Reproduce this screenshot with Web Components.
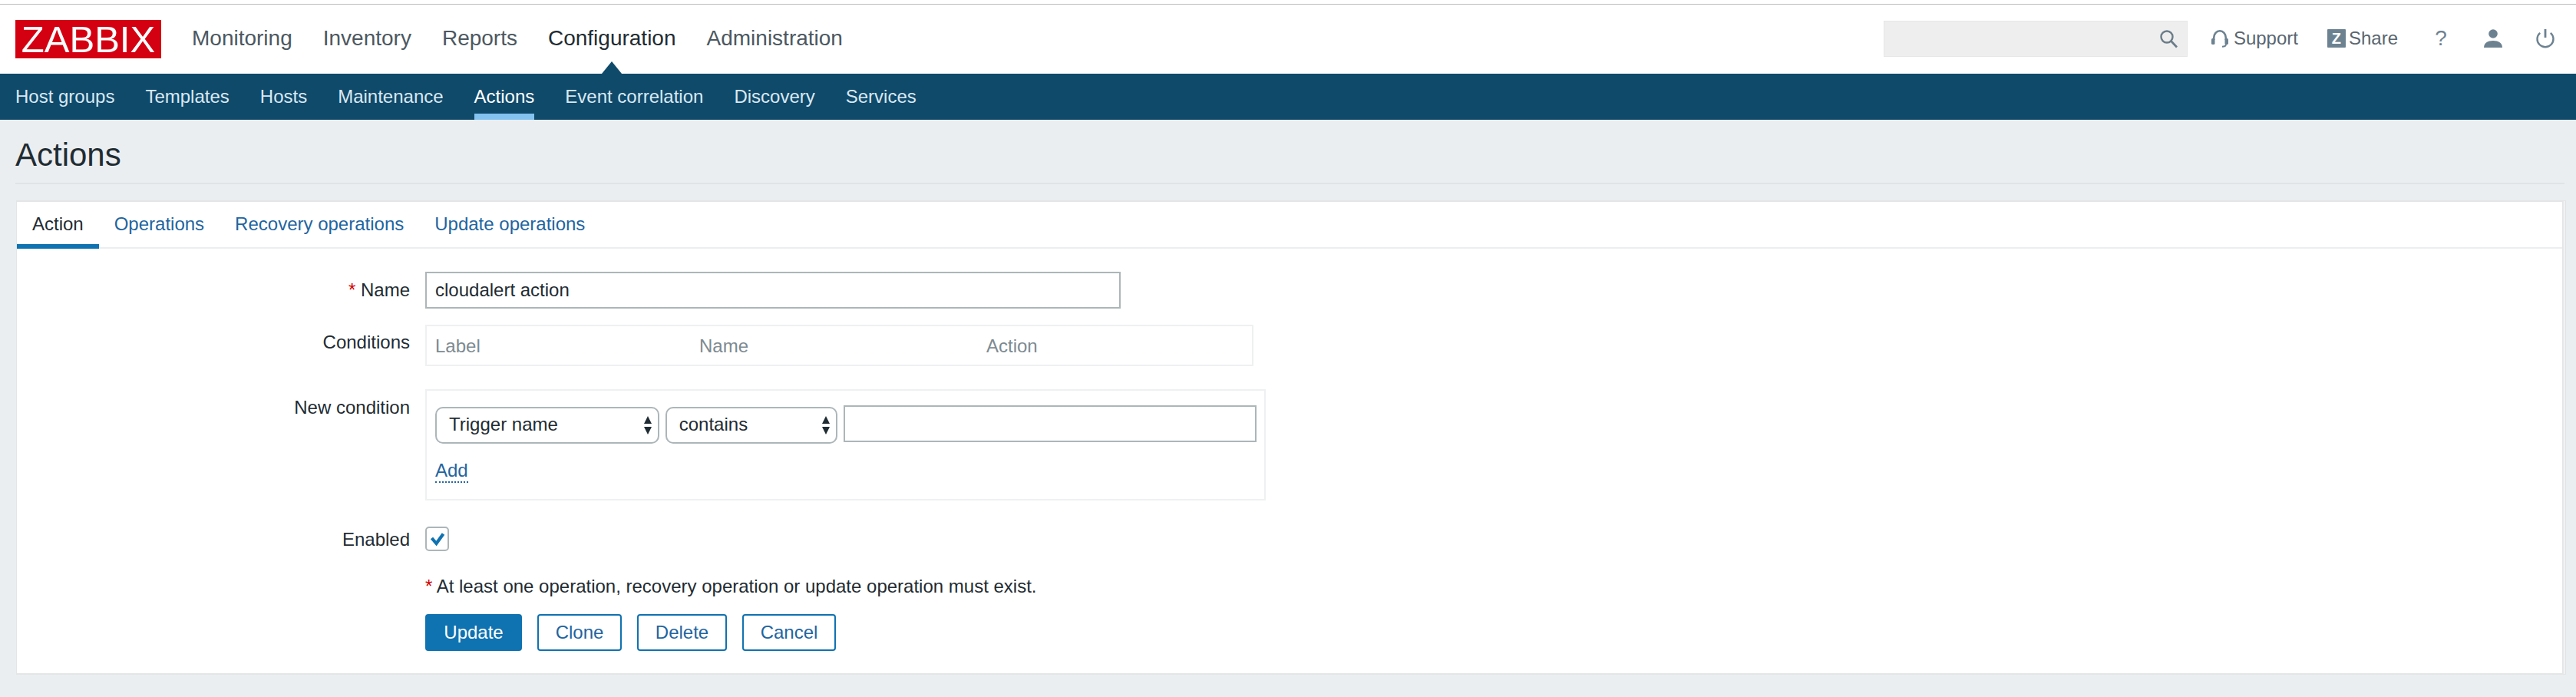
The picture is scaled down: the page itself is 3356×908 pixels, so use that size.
<!DOCTYPE html>
<html><head><meta charset="utf-8">
<style>
html,body{margin:0;padding:0;background:#ebeef0;font-family:"Liberation Sans",Arial,sans-serif;}
body{width:3356px;height:908px;overflow:hidden;}
</style></head><body>
<z-main-nav active="Configuration"></z-main-nav>
<z-sub-nav></z-sub-nav>
<z-page-title>Actions</z-page-title>
<z-card>
  <z-tabs slot="tabs"></z-tabs>
  <z-row top="30" label="Name" required><z-input w="906" value="cloudalert action"></z-input></z-row>
  <z-row top="21" label="Conditions" lh="46"><z-conditions></z-conditions></z-row>
  <z-row top="30" label="New condition"><z-new-condition></z-new-condition></z-row>
  <z-row top="34" label="Enabled" lh="34"><z-check></z-check></z-row>
  <z-row top="30" label=""><z-note>At least one operation, recovery operation or update operation must exist.</z-note></z-row>
  <z-row top="22" label=""><z-actions></z-actions></z-row>
</z-card>
<script>
const def=(n,html)=>{customElements.define(n,class extends HTMLElement{
  connectedCallback(){ if(this.shadowRoot)return; const r=this.attachShadow({mode:'open'}); r.innerHTML=typeof html==='function'?html(this):html; }
});};
const G='#6d8291';
def('z-logo',`<style>:host{display:flex;width:190px;height:50px;background:#d40011;align-items:center;justify-content:center;color:#fff;font:49px/50px "Liberation Sans",sans-serif;overflow:hidden}</style>ZABBIX`);
def('z-icon',h=>{const n=h.getAttribute('name');const m={
 search:`<circle cx="10" cy="10" r="7.5" fill="none" stroke="#6a7c88" stroke-width="2.4"/><path d="M15.5 15.5 23 23.5" stroke="#6a7c88" stroke-width="2.6" fill="none"/>`,
 headset:`<path d="M3.2 14V11a7.8 8.8 0 0 1 15.6 0v3" fill="none" stroke="${G}" stroke-width="2.6"/><rect x="0" y="12" width="4.5" height="8" rx="1.5" fill="${G}"/><rect x="17.5" y="12" width="4.5" height="8" rx="1.5" fill="${G}"/><path d="M19 19.5c0 2.4-1.6 3.2-5 3.2" fill="none" stroke="${G}" stroke-width="2"/>`,
 user:`<circle cx="12" cy="6" r="5.8" fill="${G}"/><path d="M0 24c0-6 5-9 12-9s12 3 12 9z" fill="${G}"/>`,
 power:`<path d="M5.2 4.8a10.5 10.5 0 1 0 13.6 0" fill="none" stroke="${G}" stroke-width="2.4"/><rect x="10.6" y="0" width="2.8" height="11" fill="${G}"/>`
};const w=n==='headset'?22:24;return `<style>:host{display:block;width:${w}px;height:24px;line-height:0}svg{display:block;overflow:visible}</style><svg width="${w}" height="24" viewBox="0 0 ${w} 24">${m[n]}</svg>`});
def('z-main-nav',h=>{const a=h.getAttribute('active');const items=['Monitoring','Inventory','Reports','Configuration','Administration'];
 return `<style>
 :host{display:flex;box-sizing:border-box;height:96px;background:#fff;padding:26px 28px 0 20px;position:relative;align-items:flex-start}
 .line{position:absolute;left:0;right:0;top:5px;height:1px;background:#bcbcbc}
 nav{display:flex;gap:40px;margin-left:40px;font-size:28px;line-height:48px;color:#4c5861}
 nav span{position:relative;display:block}
 nav span.on{color:#1f2c33}
 nav span.on::after{content:"";position:absolute;left:50%;margin-left:-13px;top:54px;border:13px solid transparent;border-top:0;border-bottom:16px solid #0f4a6b}
 .right{margin-left:auto;display:flex;align-items:center;height:48px;font-size:24px;color:#5a6670}
 .search{box-sizing:border-box;width:396px;height:47px;background:#eeeeee;border:1px solid #e6e6e6;display:flex;align-items:center;justify-content:flex-end;padding-right:12px;margin-right:31px}
 .l{display:flex;align-items:center;gap:7px}
 .z{box-sizing:border-box;width:24px;height:24px;background:${G};color:#fff;font:bold 20px/24px "Liberation Sans",sans-serif;text-align:center;border-radius:1px}
 .q{font-size:28px;color:${G};line-height:24px;width:24px;text-align:center}
 </style><div class="line"></div><z-logo></z-logo><nav>${items.map(i=>`<span class="${i===a?'on':''}">${i}</span>`).join('')}</nav>
 <div class="right"><div class="search"><z-icon name="search"></z-icon></div>
 <div class="l" style="margin-right:38px"><z-icon name="headset"></z-icon><span>Support</span></div>
 <div class="l" style="gap:4px;margin-right:44px"><span class="z">Z</span><span>Share</span></div>
 <span class="q" style="margin-right:44px">?</span><z-icon name="user" style="margin-right:44px"></z-icon><z-icon name="power"></z-icon></div>`});
def('z-sub-nav',()=>{const items=['Host groups','Templates','Hosts','Maintenance','Actions','Event correlation','Discovery','Services'];
 return `<style>:host{display:flex;gap:40px;box-sizing:border-box;height:60px;background:#0f4a6b;padding:0 20px;font-size:24px;line-height:60px;color:#dbe8f1}
 span{display:block;height:60px;box-sizing:border-box}
 span.on{color:#fff;box-shadow:inset 0 -8px 0 #84c2f0}</style>${items.map(i=>`<span class="${i==='Actions'?'on':''}">${i}</span>`).join('')}`});
def('z-page-title',`<style>:host{display:block;margin:0 15px 0 20px;height:84px;box-sizing:border-box;border-bottom:2px solid #e0e3e5;font-size:42px;line-height:92px;color:#1f2c33}</style><slot></slot>`);
def('z-card',`<style>:host{display:block;box-sizing:border-box;margin:21px 13px 0 21px;height:618px;background:#fff;border:1px solid #e3e5e7;border-width:2px 5px 2px 1px;border-right-style:double}</style><slot name="tabs"></slot><slot></slot>`);
def('z-tabs',()=>{const t=['Action','Operations','Recovery operations','Update operations'];
 return `<style>:host{display:flex;height:61px;box-sizing:border-box;border-bottom:2px solid #ebeef0;font-size:24px;line-height:58px;color:#1f65a0}
 span{display:block;padding:0 20px;height:61px;box-sizing:border-box}
 span.on{color:#1f2c33;box-shadow:inset 0 -6px 0 #0f72b1}</style>${t.map((x,i)=>`<span class="${i?'':'on'}">${x}</span>`).join('')}`});
def('z-row',h=>{const t=h.getAttribute('top')||0,l=h.getAttribute('label'),lh=h.getAttribute('lh')||48,r=h.hasAttribute('required');
 return `<style>:host{display:flex;margin-top:${t}px;font-size:24px;color:#1f2c33}
 .lab{width:512px;text-align:right;margin-right:20px;line-height:${lh}px;white-space:nowrap;flex:none}
 i{font-style:normal;color:#d40000}</style><div class="lab">${r?'<i>*</i> ':''}${l}</div><slot></slot>`});
def('z-input',h=>{const w=h.getAttribute('w');const v=h.getAttribute('value')||'';
 return `<style>:host{display:block;box-sizing:border-box;width:${w}px;height:48px;background:#fff;border:2px solid #acb6b8;font-size:24px;line-height:44px;padding-left:11px;color:#1f2c33}</style>${v}`});
def('z-conditions',`<style>:host{display:grid;grid-template-columns:344px 374px 1fr;box-sizing:border-box;width:1079px;height:54px;border:2px solid #eef0f1;padding:0 11px;font-size:24px;line-height:52px;color:#7d8a92}</style><span>Label</span><span>Name</span><span>Action</span>`);
def('z-select',h=>{const w=h.getAttribute('w');return `<style>:host{display:flex;box-sizing:border-box;width:${w}px;height:48px;margin-top:2px;border:2px solid #acb6b8;border-radius:10px;font-size:24px;line-height:42px;padding:0 7px 0 16px;justify-content:space-between;align-items:center;color:#1f2c33}
 span{padding-bottom:2px} svg{display:block}</style><span><slot></slot></span><svg width="12" height="26" viewBox="0 0 12 26"><path d="M6 1 11 11H1zM6 25 1 15H11z" fill="#1f2c33"/></svg>`});
def('z-new-condition',`<style>:host{display:block;box-sizing:border-box;width:1095px;height:145px;border:2px solid #eef0f1;padding:19px 10px 0 11px;font-size:24px}
 .r{display:flex;gap:8px;align-items:flex-start}
 a{display:inline-block;margin-top:21px;color:#1f65a0;border-bottom:2px dotted #1f65a0;line-height:28px}</style>
 <div class="r"><z-select w="292">Trigger name</z-select><z-select w="224">contains</z-select><z-input w="539"></z-input></div><a>Add</a>`);
def('z-check',`<style>:host{display:flex;box-sizing:border-box;width:31px;height:32px;border:2px solid #acb6b8;border-radius:5px;align-items:center;justify-content:center}svg{display:block}</style><svg width="20" height="18" viewBox="0 0 20 18"><path d="M2.5 8 8.5 15 17.5 2.5" fill="none" stroke="#0f72b1" stroke-width="4.2"/></svg>`);
def('z-note',`<style>:host{display:block;font-size:24px;line-height:28px;color:#1f2c33}i{font-style:normal;color:#d40000}</style><i>*</i> <slot></slot>`);
def('z-btn',h=>{const p=h.hasAttribute('primary');return `<style>:host{display:block;box-sizing:border-box;height:48px;border:2px solid #0f72b1;border-radius:4px;font-size:24px;line-height:44px;text-align:center;width:${h.getAttribute('w')}px;background:${p?'#0f72b1':'#fff'};color:${p?'#fff':'#1f65a0'}}</style><slot></slot>`});
def('z-actions',`<style>:host{display:flex;gap:20px}</style><z-btn primary w="126">Update</z-btn><z-btn w="110">Clone</z-btn><z-btn w="117">Delete</z-btn><z-btn w="122">Cancel</z-btn>`);
</script>
</body></html>
